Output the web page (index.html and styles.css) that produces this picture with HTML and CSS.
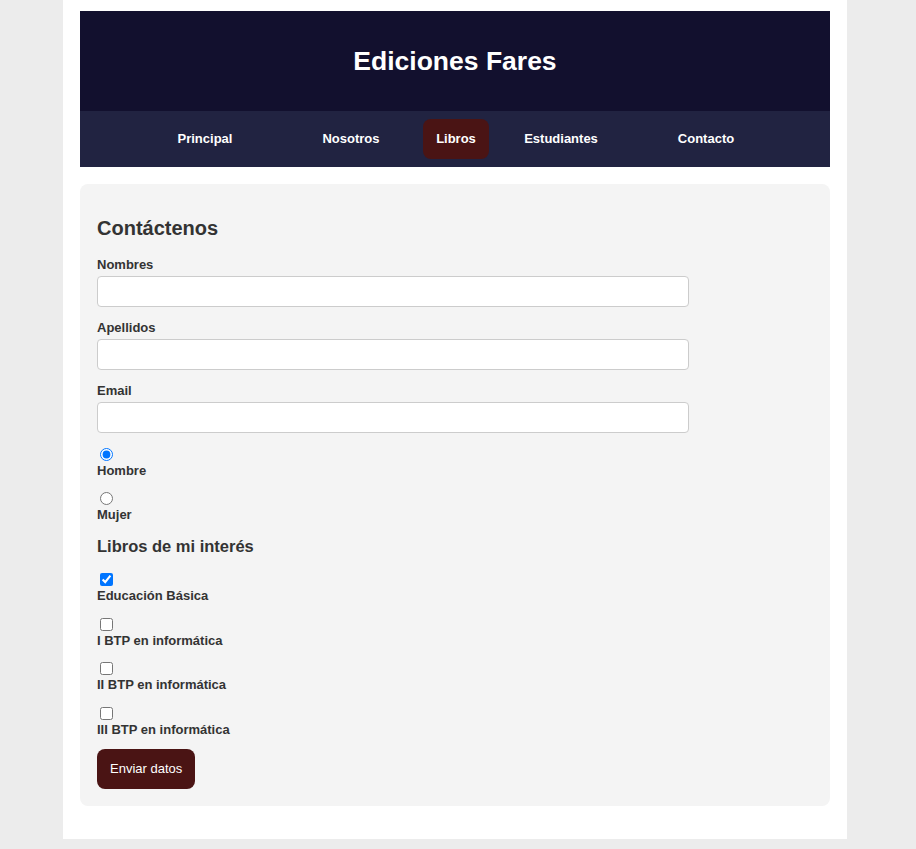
FILE: index.html
```html
<!DOCTYPE html>
<html lang="es">
<head>
<meta charset="utf-8">
<title>Ediciones Fares</title>
<link rel="stylesheet" href="styles.css">
</head>
<body>
<div class="page">
  <header class="masthead">
    <h1 class="brand">Ediciones Fares</h1>
  </header>
  <nav class="menu">
    <a class="menu-link" href="#">Principal</a>
    <a class="menu-link" href="#">Nosotros</a>
    <a class="menu-link active" href="#">Libros</a>
    <a class="menu-link" href="#">Estudiantes</a>
    <a class="menu-link" href="#">Contacto</a>
  </nav>
  <main class="card">
    <h2 class="card-title">Contáctenos</h2>
    <form class="form">
      <label class="field-label" for="nombres">Nombres</label>
      <input class="text-input" type="text" id="nombres">
      <label class="field-label" for="apellidos">Apellidos</label>
      <input class="text-input" type="text" id="apellidos">
      <label class="field-label" for="email">Email</label>
      <input class="text-input last" type="email" id="email">

      <input class="choice" type="radio" name="sexo" id="hombre" checked>
      <label class="choice-label" for="hombre">Hombre</label>
      <input class="choice" type="radio" name="sexo" id="mujer">
      <label class="choice-label" for="mujer">Mujer</label>

      <h3 class="section-title">Libros de mi interés</h3>
      <input class="choice" type="checkbox" id="b1" checked>
      <label class="choice-label book" for="b1">Educación Básica</label>
      <input class="choice" type="checkbox" id="b2">
      <label class="choice-label book" for="b2">I BTP en informática</label>
      <input class="choice" type="checkbox" id="b3">
      <label class="choice-label book" for="b3">II BTP en informática</label>
      <input class="choice" type="checkbox" id="b4">
      <label class="choice-label book last" for="b4">III BTP en informática</label>

      <button class="submit" type="button">Enviar datos</button>
    </form>
  </main>
</div>
</body>
</html>
```
FILE: styles.css
```css
* { box-sizing: border-box; }

body {
  margin: 0;
  padding-right: 6px;
  background: #ececec;
  font-family: "Liberation Sans", Arial, sans-serif;
  color: #333;
}

.page {
  width: 784px;
  margin: 0 auto;
  background: #fff;
  padding: 11px 17px 33px;
}

.masthead {
  background: #12102e;
  height: 100px;
  display: flex;
  align-items: center;
  justify-content: center;
}

.brand {
  margin: 0;
  color: #fff;
  font-size: 26.5px;
  font-weight: bold;
  line-height: 30px;
}

.menu {
  background: #212341;
  height: 56px;
  display: grid;
  grid-template-columns: 162px 130px 80px 130px 160px;
  justify-content: center;
  justify-items: center;
  align-items: center;
}

.menu-link {
  color: #fff;
  text-decoration: none;
  font-weight: bold;
  font-size: 13px;
  line-height: 16px;
  padding: 12px 13px;
  border-radius: 8px;
}

.menu-link.active {
  background: #4a1414;
}

.card {
  margin-top: 17px;
  background: #f4f4f4;
  border-radius: 8px;
  padding: 17px 17px 17px;
}

.card-title {
  margin: 16px 0 17px;
  font-size: 20px;
  line-height: 23px;
  font-weight: bold;
  color: #333;
}

.form {
  display: flex;
  flex-direction: column;
  align-items: flex-start;
}

.field-label {
  display: block;
  font-size: 13px;
  line-height: 16px;
  font-weight: bold;
  margin-bottom: 3px;
}

.text-input {
  width: 592px;
  height: 31px;
  border: 1px solid #ccc;
  border-radius: 4px;
  background: #fff;
  margin: 0 0 13px;
  padding: 6px 8px;
  font: inherit;
}

.text-input.last {
  margin-bottom: 12px;
}

.choice {
  margin: 3px 3px 2px 3px;
  width: 13px;
  height: 13px;
}

.choice-label {
  display: block;
  font-size: 13px;
  line-height: 16px;
  font-weight: bold;
  margin-bottom: 10px;
}

.choice-label.book {
  margin-bottom: 10.5px;
}

.choice-label.last {
  margin-bottom: 11px;
}

.section-title {
  margin: 4px 0 14px;
  font-size: 16.5px;
  line-height: 19px;
  font-weight: bold;
  color: #333;
}

.submit {
  margin: 0;
  background: #4a1414;
  color: #fff;
  border: none;
  border-radius: 8px;
  height: 40px;
  padding: 0 13px;
  font-family: inherit;
  font-size: 13px;
  cursor: pointer;
}
```
